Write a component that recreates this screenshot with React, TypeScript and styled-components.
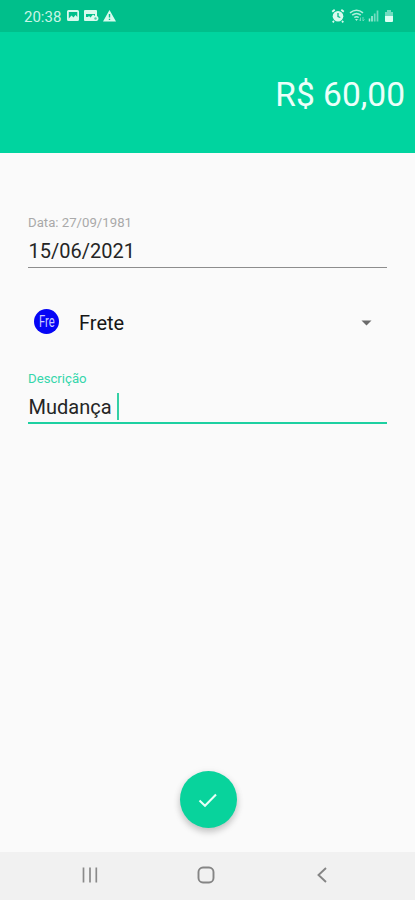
import React from "react";
import styled, { createGlobalStyle } from "styled-components";

const GlobalStyle = createGlobalStyle`
  * { box-sizing: border-box; }
  body { margin: 0; font-family: Roboto, "Liberation Sans", sans-serif; background: #fafafa; }
`;

const Screen = styled.div`
  display: flex;
  flex-direction: column;
  width: 415px;
  height: 900px;
  overflow: hidden;
  background: #fafafa;
`;

const StatusBar = styled.div`
  display: flex;
  align-items: center;
  justify-content: space-between;
  height: 32px;
  padding: 0 20px 0 24px;
  background: #00bf8b;
  color: #c9f5e6;
`;

const Clock = styled.span`
  font-size: 15px;
  line-height: 18px;
  width: 43px;
  padding-top: 2px;
`;

const IconGroup = styled.div`
  display: flex;
  align-items: center;
`;

const Header = styled.header`
  display: flex;
  justify-content: flex-end;
  height: 121px;
  padding: 43px 10px 0 0;
  background: #00d49f;
`;

const Amount = styled.h1`
  margin: 0;
  font-size: 33.5px;
  line-height: 40px;
  font-weight: 400;
  color: #ecfffa;
  white-space: nowrap;
`;

const Form = styled.main`
  display: flex;
  flex: 1;
  flex-direction: column;
  padding: 62px 28px 0;
`;

const Field = styled.label<{ $active?: boolean }>`
  display: flex;
  flex-direction: column;
  height: 53px;
  border-bottom: ${(p) => (p.$active ? "2px solid #1dd0a1" : "1px solid #8d8d8d")};
`;

const FieldLabel = styled.span<{ $active?: boolean }>`
  font-size: 13.2px;
  line-height: 16px;
  color: ${(p) => (p.$active ? "#35d6ab" : "#a9a9a9")};
`;

const FieldValue = styled.span`
  display: flex;
  align-items: center;
  height: 28px;
  margin-top: 6px;
  padding-left: 0.5px;
  font-size: 20px;
  color: #252525;
  white-space: pre;
`;

const Caret = styled.span`
  width: 2px;
  height: 27px;
  margin: 0 0 2px 5px;
  background: #35d0a5;
`;

const Category = styled.div`
  display: flex;
  align-items: center;
  height: 40px;
  margin: 35px 0 28px;
  padding: 0 15px 0 6px;
`;

const Badge = styled.span`
  display: flex;
  align-items: center;
  justify-content: center;
  width: 25px;
  height: 25px;
  margin-bottom: 4px;
  border-radius: 50%;
  background: #0505f5;
  color: #c9cbff;
  font-size: 17px;
`;

const BadgeText = styled.span`
  transform: scaleX(0.66);
`;

const CategoryName = styled.span`
  flex: 1;
  margin-left: 20px;
  padding-bottom: 1px;
  font-size: 20px;
  color: #161616;
`;

const Actions = styled.div`
  display: flex;
  justify-content: center;
  height: 81px;
  padding-left: 1px;
`;

const ConfirmButton = styled.button`
  display: flex;
  align-items: center;
  justify-content: center;
  width: 57px;
  height: 57px;
  padding: 0;
  border: 0;
  border-radius: 50%;
  background: #08d39c;
  box-shadow: 0 4px 7px rgba(0, 0, 0, 0.2), 0 1px 8px rgba(0, 0, 0, 0.06);
`;

const NavBar = styled.nav`
  display: grid;
  grid-template-columns: 32px 116px 116px 116px 35px;
  align-items: center;
  justify-items: center;
  height: 48px;
  padding-bottom: 2px;
  background: #f1f1f1;
  svg { grid-row: 1; }
  svg:nth-child(1) { grid-column: 2; }
  svg:nth-child(2) { grid-column: 3; }
  svg:nth-child(3) { grid-column: 4; }
`;

const Notifications = () => (
  <svg width="50" height="14" viewBox="0 0 50 14" fill="#d8faee">
    <path fillRule="evenodd" d="M1.500 1h9q1.500 0 1.500 1.500v8q0 1.500-1.500 1.500h-9Q0 12 0 10.500v-8Q0 1 1.500 1ZM1.800 3v6.500l2.700-3 2 2L8.500 6l1.800 2V3Z" />
    <path fillRule="evenodd" d="M18 1h11q1 0 1 1v5q1.500.5 1.500 2.500t-2 2.500H18q-1 0-1-1V2q0-1 1-1ZM19 5v3h2l1-1 1.500 1.500L26 5.500 28 7V5Z" />
    <circle cx="28.500" cy="9.500" r="1.200" fill="#45d0a9" />
    <path fillRule="evenodd" d="M42.500 1 49 12.500H36ZM41.800 5v3.500h1.400V5Zm0 4.700V11h1.400V9.700Z" />
  </svg>
);

const SystemIcons = () => (
  <svg width="64" height="16" viewBox="0 0 64 16" fill="none">
    <circle cx="7" cy="8.200" r="5.300" fill="#d8faee" />
    <path d="M1.200 3.700 3.700 1.700M10.300 1.700l2.500 2M3 13l-1.300 1.300M11 13l1.300 1.300" stroke="#d8faee" strokeWidth="1.800" />
    <path d="M7 5v3.500l2.300 1" stroke="#00b887" strokeWidth="1.300" />
    <path d="M19 4.800q6.500-5 13 0M21.200 7.200q4.300-3.400 8.600 0M23.300 9.500q2.200-1.700 4.400 0" stroke="#b4efdd" strokeWidth="1.500" />
    <path d="M24 11h3l-1.500 2Z" fill="#b4efdd" />
    <path d="M29.500 13V9.500m-1.300 2 1.300 1.500M32 9v4m1.500-1.500L32 13" stroke="#6edbbd" />
    <path d="M38.500 13.500v-3m2.500 3V8" stroke="#b4efdd" strokeWidth="1.500" />
    <path d="M43.700 13.500v-8m2.800 8V2.500" stroke="#73dcc0" strokeWidth="1.700" />
    <path d="M56 2h4v2h2v4h-8V4h2Z" fill="#70dcc0" />
    <path d="M54 8h8v5q0 1-1 1h-6q-1 0-1-1Z" fill="#dcfff4" />
  </svg>
);

export default function App() {
  return (
    <>
      <GlobalStyle />
      <Screen>
        <StatusBar>
          <IconGroup>
            <Clock>20:38</Clock>
            <Notifications />
          </IconGroup>
          <SystemIcons />
        </StatusBar>
        <Header>
          <Amount>R$ 60,00</Amount>
        </Header>
        <Form>
          <Field>
            <FieldLabel>Data: 27/09/1981</FieldLabel>
            <FieldValue>15/06/2021</FieldValue>
          </Field>
          <Category>
            <Badge><BadgeText>Fre</BadgeText></Badge>
            <CategoryName>Frete</CategoryName>
            <svg width="11" height="6" viewBox="0 0 11 6">
              <path d="M0.500 0.500h10l-5 5Z" fill="#6b6b6b" />
            </svg>
          </Category>
          <Field $active>
            <FieldLabel $active>Descrição</FieldLabel>
            <FieldValue>Mudança<Caret /></FieldValue>
          </Field>
        </Form>
        <Actions>
          <ConfirmButton aria-label="Confirmar">
            <svg width="20" height="16" viewBox="0 0 20 16" fill="none">
              <path d="M1.500 8.500 7 13.700 18 2.500" stroke="#e6fff7" strokeWidth="2.100" />
            </svg>
          </ConfirmButton>
        </Actions>
        <NavBar>
          <svg width="18" height="18" viewBox="0 0 18 18" fill="none" stroke="#8a8a8a" strokeWidth="1.700">
            <path d="M2.500 1.500v15M9 1.500v15M15.300 1.500v15" />
          </svg>
          <svg width="18" height="18" viewBox="0 0 18 18" fill="none" stroke="#858585" strokeWidth="1.900">
            <rect x="1.500" y="1.500" width="15" height="15" rx="4.500" />
          </svg>
          <svg width="12" height="18" viewBox="0 0 12 18" fill="none" stroke="#858585" strokeWidth="1.900">
            <path d="M10 2 2.500 9 10 16" />
          </svg>
        </NavBar>
      </Screen>
    </>
  );
}
